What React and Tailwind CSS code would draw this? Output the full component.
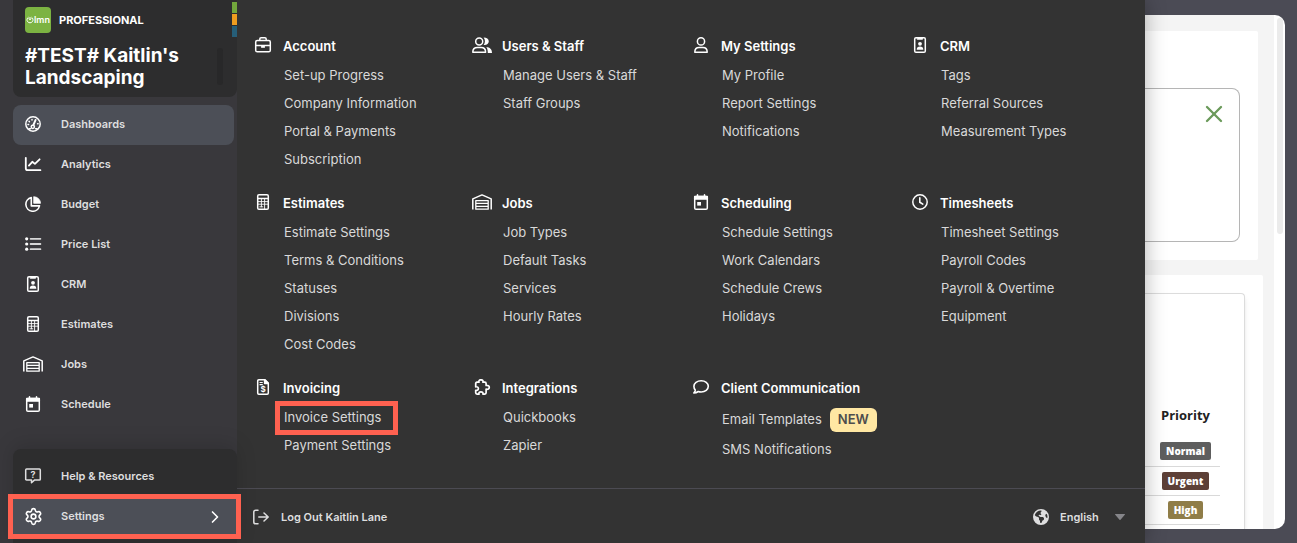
import { Settings, ChevronRight, X } from 'lucide-react'
import { FaEarthAmericas } from 'react-icons/fa6'

// Shared wrapper: every menu icon is centred in a 20x16 box
function Icon({ children }) {
  return (
    <svg viewBox="0 0 20 16" className="w-5 h-4 shrink-0" fill="none" stroke="currentColor"
      strokeWidth="1.5" strokeLinecap="round" strokeLinejoin="round" aria-hidden="true">
      {children}
    </svg>
  )
}

const GaugeIcon = () => (
  <Icon>
    <circle cx="10" cy="8" r="7.2" />
    <path d="M12.6 3.9 10.4 9" strokeWidth="1.9" />
    <circle cx="9.8" cy="10.8" r="1.6" />
    <path d="M5 8.6h.6M6 5.2l.4.4M9 3.6v.4M14.6 7.8h.5" />
    <path d="M6 12.8h1.6M12.6 12.8h1.5" />
  </Icon>
)

const ChartIcon = () => (
  <Icon>
    <path d="M2.8 1.8v10.4a2 2 0 0 0 2 2h12.6" strokeWidth="1.8" />
    <path d="m5.9 9.6 3.4-3.8 2.6 2.1 4.7-4.6" strokeWidth="1.8" />
  </Icon>
)

const PieIcon = () => (
  <Icon>
    <path d="M8.3 1.6a6.9 6.9 0 1 0 8.2 8.3H8.3z" strokeWidth="1.6" />
    <path d="M11 .7a6.6 6.6 0 0 1 6.5 6.6H11z" fill="currentColor" strokeWidth=".8" />
  </Icon>
)

const ListIcon = () => (
  <Icon>
    <path d="M7.6 2.8h9.8M7.6 8h9.8M7.6 13.2h9.8" strokeWidth="1.8" opacity=".8" />
    <g fill="currentColor" stroke="none">
      <circle cx="3.7" cy="2.8" r="1.6" />
      <circle cx="3.7" cy="8" r="1.6" />
      <circle cx="3.7" cy="13.2" r="1.6" />
    </g>
  </Icon>
)

const BadgeIcon = () => (
  <Icon>
    <rect x="4.7" y=".8" width="10.6" height="14.4" rx="1.3" />
    <path d="M7.5.7h5v1.6h-5z" fill="currentColor" strokeWidth=".8" />
    <circle cx="10" cy="6.8" r="1.9" fill="currentColor" stroke="none" />
    <path d="M6.7 12.8c0-2.100 1.200-3.200 3.300-3.200s3.300 1.100 3.300 3.200z" fill="currentColor" stroke="none" />
  </Icon>
)

const CalculatorIcon = () => (
  <Icon>
    <rect x="4.7" y=".8" width="10.6" height="14.4" rx="1.3" />
    <path d="M5 4.6h10" />
    <path d="M5.3 7.6h9.4M5.3 10.2h9.4M8.4 5v7.8M11.6 5v9.6M6.8 12.8h3" strokeWidth=".9" />
  </Icon>
)

const GarageIcon = () => (
  <Icon>
    <path d="M.8 15.6V4.9L10 .9l9.200 4v10.700" strokeLinecap="butt" />
    <path d="M3.8 15.2V6.600h12.400v8.600zM4 9.400h12M4 12.300h12" strokeWidth="1.300" />
  </Icon>
)

const CalendarIcon = () => (
  <Icon>
    <rect x="3.7" y="2.5" width="12.6" height="12.7" rx="1.3" />
    <path d="M3.7 2.5h12.6v2.6H3.7z" fill="currentColor" />
    <path d="M6.5.8v2M13.5.8v2" />
    <path d="M6.2 8h3.8v3.6H6.2z" fill="currentColor" stroke="none" />
  </Icon>
)

const HelpIcon = () => (
  <Icon>
    <path d="M3.6 1h12.8c.5 0 .9.4.9.9v9.3c0 .5-.4.9-.9.9h-5l-2.900 2.600v-2.600H3.600a.9.9 0 0 1-.9-.9V1.900c0-.5.4-.9.9-.9z" />
    <text x="10" y="9.800" textAnchor="middle" fontSize="9" fontWeight="700" fill="currentColor" stroke="none">?</text>
  </Icon>
)

const BriefcaseIcon = () => (
  <Icon>
    <rect x="2.7" y="3.4" width="14.6" height="11.4" rx="1.6" />
    <path d="M6.8 3.2V2.1c0-.8.5-1.3 1.3-1.3h3.8c.8 0 1.3.5 1.3 1.3v1.1M2.9 8.600h14.200" />
    <path d="M8.100 8.600h3.800v2.200H8.100z" fill="currentColor" stroke="none" />
  </Icon>
)

const UsersIcon = () => (
  <Icon>
    <circle cx="7.2" cy="4.4" r="3.5" />
    <path d="M.8 15.2c0-3.1 2-4.7 4.600-4.700h3.700c2.600 0 4.500 1.600 4.500 4.700z" />
    <path d="M11.600.4c3 0 5.200 1.400 5.200 3.900s-2.200 4-5.200 3.700c1.800-2.200 1.800-5.400 0-7.600zM14.300 9.900c3.600.2 5.700 2.200 5.700 6.100h-4.200c0-2.700-.3-4.500-1.500-6.100z" fill="currentColor" stroke="none" />
  </Icon>
)

const UserIcon = () => (
  <Icon>
    <circle cx="10" cy="4.4" r="3.6" />
    <path d="M3.8 15.2c0-3.100 1.900-4.700 4.300-4.700h3.800c2.400 0 4.300 1.600 4.300 4.700z" />
  </Icon>
)

const ClockIcon = () => (
  <Icon>
    <circle cx="10" cy="8" r="7.2" />
    <path d="M9.8 3.9v4.300l3 1.900" strokeWidth="1.6" />
  </Icon>
)

const InvoiceIcon = () => (
  <Icon>
    <path d="M5.8.8H12l3.300 3.300v10c0 .6-.5 1.100-1.100 1.100H5.800c-.6 0-1.100-.5-1.100-1.100V1.900c0-.6.5-1.100 1.100-1.100z" />
    <path d="M11.600.9v3.600h3.600z" fill="currentColor" />
    <path d="M7 3.500h2.300M7 5.700h2.300" strokeWidth="1.200" />
    <text x="10.200" y="13.300" textAnchor="middle" fontSize="8" fontWeight="700" fill="currentColor" stroke="none">$</text>
  </Icon>
)

const PuzzleIcon = () => (
  <Icon>
    <path d="M5 3.200h2C6.500 1.700 7.400.8 8.900.8s2.500.9 2 2.400h1.900c.8 0 1.300.5 1.300 1.300v1.900c1.900-.3 3.200.4 3.200 1.900s-1.300 2.300-3.200 1.900v3.600c0 .8-.5 1.300-1.300 1.300h-1.900c.4-1.500-.6-2.300-2-2.300s-2.300.8-1.900 2.300H5c-.8 0-1.300-.5-1.300-1.300v-2.500c1.700.3 2.700-.4 2.700-1.700S5.400 7.500 3.700 7.800V4.500c0-.8.5-1.300 1.300-1.300z" strokeWidth="1.700" />
  </Icon>
)

const ChatIcon = () => (
  <Icon>
    <path d="M10.2 1.700c4 0 7.100 2.400 7.100 5.600s-3.100 5.700-7.100 5.700c-1 0-2-.1-2.900-.5-1.200.9-2.700 1.500-4.500 1.500.8-.8 1.300-1.700 1.500-2.900-1-1-1.400-2.300-1.400-3.800 0-3.200 3.200-5.600 7.300-5.600z" strokeWidth="1.600" />
  </Icon>
)

const LogOutIcon = () => (
  <svg viewBox="0 0 16 16" className="size-4 shrink-0" fill="none" stroke="currentColor"
    strokeWidth="1.5" strokeLinecap="round" strokeLinejoin="round" aria-hidden="true">
    <path d="M5 1.200H2.700c-1 0-1.900.8-1.900 1.900v9.800c0 1 .8 1.900 1.900 1.900H5M5.800 8h9.300M11 4l4.200 4-4.200 4" />
  </svg>
)

const navItems = [
  { label: 'Dashboards', icon: GaugeIcon, active: true },
  { label: 'Analytics', icon: ChartIcon },
  { label: 'Budget', icon: PieIcon },
  { label: 'Price List', icon: ListIcon },
  { label: 'CRM', icon: BadgeIcon },
  { label: 'Estimates', icon: CalculatorIcon },
  { label: 'Jobs', icon: GarageIcon },
  { label: 'Schedule', icon: CalendarIcon },
]

const sections = [
  { title: 'Account', icon: BriefcaseIcon, links: ['Set-up Progress', 'Company Information', 'Portal & Payments', 'Subscription'] },
  { title: 'Users & Staff', icon: UsersIcon, links: ['Manage Users & Staff', 'Staff Groups'] },
  { title: 'My Settings', icon: UserIcon, links: ['My Profile', 'Report Settings', 'Notifications'] },
  { title: 'CRM', icon: BadgeIcon, links: ['Tags', 'Referral Sources', 'Measurement Types'] },
  { title: 'Estimates', icon: CalculatorIcon, links: ['Estimate Settings', 'Terms & Conditions', 'Statuses', 'Divisions', 'Cost Codes'] },
  { title: 'Jobs', icon: GarageIcon, links: ['Job Types', 'Default Tasks', 'Services', 'Hourly Rates'] },
  { title: 'Scheduling', icon: CalendarIcon, links: ['Schedule Settings', 'Work Calendars', 'Schedule Crews', 'Holidays'] },
  { title: 'Timesheets', icon: ClockIcon, links: ['Timesheet Settings', 'Payroll Codes', 'Payroll & Overtime', 'Equipment'] },
  { title: 'Invoicing', icon: InvoiceIcon, links: ['Invoice Settings', 'Payment Settings'] },
  { title: 'Integrations', icon: PuzzleIcon, links: ['Quickbooks', 'Zapier'] },
  { title: 'Client Communication', icon: ChatIcon, links: ['Email Templates', 'SMS Notifications'] },
]

const HIGHLIGHTED = 'Invoice Settings'
const NEW_LINK = 'Email Templates'

const priorities = [
  { label: 'Normal', color: 'bg-[#5e5e5e]' },
  { label: 'Urgent', color: 'bg-[#5d4037]' },
  { label: 'High', color: 'bg-[#8f7d48]' },
]

function Sidebar() {
  return (
    <aside className="relative z-20 w-[237px] shrink-0 flex flex-col pl-[13px] bg-[#39383c]">
      <header className="flex justify-between h-[97px] pl-3 rounded-b-lg bg-[#2d2d2e]">
        <div>
          <div className="flex items-center gap-2 mt-[7px]">
            <span className="flex items-center justify-center size-[26px] rounded bg-[#7cb342] text-[9px] font-semibold text-white">
              <svg viewBox="0 0 8 8" className="size-2" fill="none" stroke="currentColor" strokeWidth="1" aria-hidden="true">
                <path d="M2.5 1.2a3 3 0 1 0 3 0M4 3.8V1M2.6 2.4 4 3.8l1.400-1.400" />
              </svg>
              lmn
            </span>
            <span className="text-[11px] font-bold text-white">PROFESSIONAL</span>
          </div>
          <h1 className="mt-3 w-[180px] text-[19px] leading-[22px] font-bold text-white">#TEST# Kaitlin's Landscaping</h1>
        </div>
        <div className="flex gap-[9px]">
          <span className="mt-12 w-1.5 h-[37px] rounded-full bg-[#282829]" />
          <div className="flex flex-col gap-px mt-0.5">
            <span className="w-[5px] h-[11px] bg-[#72a63c]" />
            <span className="w-[5px] h-[11px] bg-[#ee9c1f]" />
            <span className="w-[5px] h-[11px] bg-[#265e78]" />
          </div>
        </div>
      </header>

      <nav className="flex-1 mt-2 pr-[3px]">
        {navItems.map(({ label, icon: NavIcon, active }) => (
          <a key={label} href="#"
            className={`flex items-center gap-[18px] h-10 pl-2.5 pb-0.5 rounded-lg text-[11px] font-semibold ${active ? 'bg-[#4c4f57]' : ''}`}>
            <span className="text-white"><NavIcon /></span>
            <span className="text-[#dededf]">{label}</span>
          </a>
        ))}
      </nav>

      <div className="pb-[9px] pt-2 pr-px rounded-t-lg bg-[#2d2d2e] text-[11px] font-semibold text-[#dededf] shadow-[0_-4px_20px_rgba(0,0,0,0.15)]">
        <a href="#" className="flex items-center gap-[18px] h-[42px] pl-2.5 pb-1">
          <HelpIcon />
          Help & Resources
        </a>
        <a href="#" className="flex items-center h-[35px] pl-2.5 pr-[11px] bg-[#4c4f57] outline-5 outline-[#ff6150]">
          <span className="flex justify-center w-5 text-white"><Settings size={19} strokeWidth={2} /></span>
          <span className="flex-1 pl-[18px]">Settings</span>
          <ChevronRight size={20} strokeWidth={2} className="text-white" />
        </a>
      </div>
    </aside>
  )
}

function MenuSection({ title, icon: SectionIcon, links }) {
  return (
    <section>
      <h2 className="flex items-center gap-2.5 h-[30px] text-[13px] font-semibold text-white">
        <span className="mb-1"><SectionIcon /></span>
        {title}
      </h2>
      <ul className="pl-[27px] text-[13px] text-[#d9d9d9]">
        {links.map((link) => (
          <li key={link} className={`flex items-center gap-1 ${link === NEW_LINK ? 'h-8' : 'h-7'}`}>
            <a href="#"
              className={`flex items-center h-6 pl-1 ${link === HIGHLIGHTED ? 'pr-3 outline-5 outline-[#ff6150]' : 'pr-1'}`}>
              {link}
            </a>
            {link === NEW_LINK && (
              <span className="flex items-center h-6 px-2 rounded-md bg-[#ffe7a3] font-semibold text-[#4d4d4d]">NEW</span>
            )}
          </li>
        ))}
      </ul>
    </section>
  )
}

function SettingsMenu() {
  return (
    <div className="relative z-10 w-[908px] shrink-0 flex flex-col bg-[#333] shadow-[0_0_20px_rgba(0,0,0,0.3)]">
      <div className="flex-1 grid grid-cols-4 content-start gap-y-[15px] px-4 pt-8">
        {sections.map((s) => <MenuSection key={s.title} {...s} />)}
      </div>
      <footer className="flex items-center justify-between h-[55px] pt-0.5 pl-4 pr-5 border-t border-[#4c4b53] text-[11px] font-semibold text-[#dededf]">
        <a href="#" className="flex items-center gap-3">
          <LogOutIcon />
          Log Out Kaitlin Lane
        </a>
        <div className="flex items-center">
          <FaEarthAmericas size={16} />
          <select aria-label="Language" defaultValue="English" className="ml-[11px] w-[55px] appearance-none bg-transparent outline-none">
            <option>English</option>
          </select>
          <svg viewBox="0 0 10 6" className="w-2.5 h-1.5" fill="#86868a" aria-hidden="true">
            <path d="M.5 0h9c.4 0 .6.4.3.7L5.5 5.700a.7.7 0 0 1-1 0L.2.7C-.1.4.1 0 .5 0z" />
          </svg>
        </div>
      </footer>
    </div>
  )
}

function DashboardPage() {
  return (
    <main className="flex-1 min-w-0 py-[15px] pr-3 pb-3.5">
      <div className="flex h-full rounded-r-[10px] bg-white overflow-hidden">
        <div className="flex-1 flex flex-col gap-[15px] pt-4 bg-[#f4f4f4]">
          <div className="h-[229px] mr-4 pr-[18px] pt-[57px] bg-white rounded-r-xs">
            <div className="flex justify-end h-[154px] pt-[11px] pr-[11px] border border-l-0 border-[#b5b5b5] rounded-r-lg">
              <button type="button" aria-label="Close" className="size-7 text-[#6b9a5b]">
                <X size={28} strokeWidth={2} />
              </button>
            </div>
          </div>
          <div className="flex-1 mr-[11px] pr-[18px] pt-[18px] bg-white rounded-tr-xs">
            <div className="h-full pt-28 pr-6 border border-l-0 border-b-0 border-[#dcdcdc] rounded-tr shadow-md">
              <table className="w-full font-['Open_Sans',sans-serif] text-center">
                <thead>
                  <tr>
                    <th className="pb-[13px] pl-1.5 text-[13px] leading-[18px] font-bold text-[#222]">Priority</th>
                  </tr>
                </thead>
                <tbody>
                  {priorities.map((p) => (
                    <tr key={p.label} className="h-[29px] border-b border-[#d9d9d9]">
                      <td className="pl-1.5 align-middle">
                        <span className={`block w-fit mx-auto px-1.5 rounded-xs text-[10px] leading-[18px] font-extrabold text-white ${p.color}`}>{p.label}</span>
                      </td>
                    </tr>
                  ))}
                </tbody>
              </table>
            </div>
          </div>
        </div>
        <div className="w-[11px] pt-[3px] pl-[3px]">
          <div className="w-1.5 h-[216px] rounded-full bg-[#ebebeb]" />
        </div>
      </div>
    </main>
  )
}

export default function App() {
  return (
    <div className="flex h-screen overflow-hidden bg-[#4b4b55] font-[Inter,sans-serif]">
      <Sidebar />
      <SettingsMenu />
      <DashboardPage />
    </div>
  )
}
